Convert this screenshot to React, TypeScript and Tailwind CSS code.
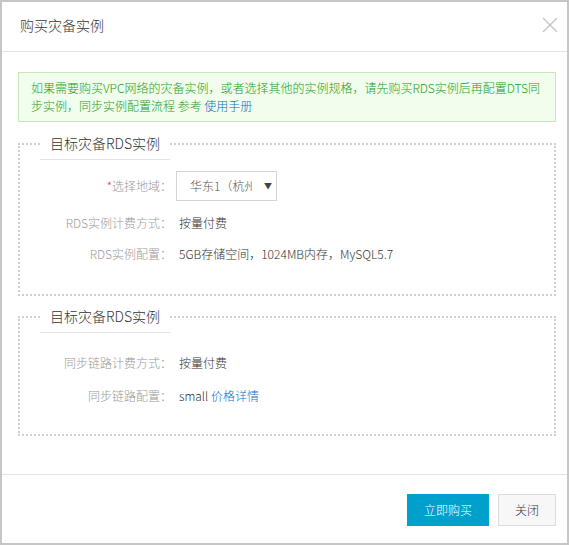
import type { ReactNode } from "react"

const FONT = { fontFamily: '"Noto Sans CJK SC", "Noto Sans", sans-serif' }

function Row({
  label,
  required,
  children,
  className = "",
}: {
  label: string
  required?: boolean
  children: ReactNode
  className?: string
}) {
  return (
    <div className={`flex items-center ${className}`}>
      <div className="w-[152px] shrink-0 text-right text-[12px] leading-[18px] text-[#999]">
        {required && <span className="text-[#e4393c]">*</span>}
        {label}：
      </div>
      <div className="ml-[4px] text-[12px] leading-[18px] text-[#333]">{children}</div>
    </div>
  )
}

function Section({
  title,
  className = "",
  children,
}: {
  title: string
  className?: string
  children: ReactNode
}) {
  return (
    <fieldset className={`border-2 border-dotted border-[#cfcfcf] ${className}`}>
      <legend className="ml-5 border-b border-[#e3e3e3] px-[10px] text-[14px] leading-[32px] text-[#333]">
        {title}
      </legend>
      {children}
    </fieldset>
  )
}

export default function App() {
  return (
    <div
      style={FONT}
      className="flex h-[545px] w-[569px] flex-col border-2 border-[#c6c6c6] bg-white font-light"
    >
      {/* header */}
      <div className="flex h-[50px] shrink-0 items-center justify-between border-b border-[#e5e5e5] pb-[2px] pl-[18px] pr-[9px]">
        <span className="text-[14px] text-[#333]">购买灾备实例</span>
        <svg width="16" height="16" viewBox="0 0 16 16" className="-mt-[2px]">
          <path d="M1 1 L15 15 M15 1 L1 15" stroke="#c4c4c4" strokeWidth="1.4" fill="none" />
        </svg>
      </div>

      {/* body */}
      <div className="flex-1 pl-[16px] pr-[11px] pt-[20px]">
        <div className="border border-[#c8e6b8] bg-[#f1fded] py-[6px] pl-[12px] text-[12px] leading-[18px] text-[#22a01c]">
          如果需要购买VPC网络的灾备实例，或者选择其他的实例规格，请先购买RDS实例后再配置DTS同
          <br />
          步实例，同步实例配置流程 参考 <span className="text-[#0a6fc9]">使用手册</span>
        </div>

        <Section title="目标灾备RDS实例" className="mt-[5px] pb-[31px]">
          <div className="flex flex-col pt-[11px]">
            <Row label="选择地域" required>
              <div className="flex h-[30px] w-[101px] items-center border border-[#d4d4d4] pl-[13px]">
                <span className="w-[62px] overflow-hidden whitespace-nowrap text-[#555]">华东1（杭州）</span>
                <span className="ml-[12px] text-[8px] leading-none text-[#444]">▼</span>
              </div>
            </Row>
            <Row label="RDS实例计费方式" className="mt-[12px] h-[19px]">
              <span className="pl-[3px]">按量付费</span>
            </Row>
            <Row label="RDS实例配置" className="mt-[12px] h-[19px]">
              <span className="pl-[3px]">5GB存储空间，1024MB内存，MySQL5.7</span>
            </Row>
          </div>
        </Section>

        <Section title="目标灾备RDS实例" className="mt-[4px] pb-[29px]">
          <div className="flex flex-col pt-[20px]">
            <Row label="同步链路计费方式" className="h-[19px]">
              <span className="pl-[3px]">按量付费</span>
            </Row>
            <Row label="同步链路配置" className="mt-[14px] h-[19px]">
              <span className="pl-[3px]">
                small <span className="text-[#0a6fc9]">价格详情</span>
              </span>
            </Row>
          </div>
        </Section>
      </div>

      {/* footer */}
      <div className="flex h-[69px] shrink-0 justify-end gap-[9px] border-t border-[#e5e5e5] pr-[11px] pt-[19px]">
        <button className="h-[32px] w-[82px] bg-[#00a0cc] text-[12px] text-white">立即购买</button>
        <button className="h-[32px] w-[58px] border border-[#dcdcdc] bg-[#f7f7f7] text-[12px] text-[#333]">
          关闭
        </button>
      </div>
    </div>
  )
}
